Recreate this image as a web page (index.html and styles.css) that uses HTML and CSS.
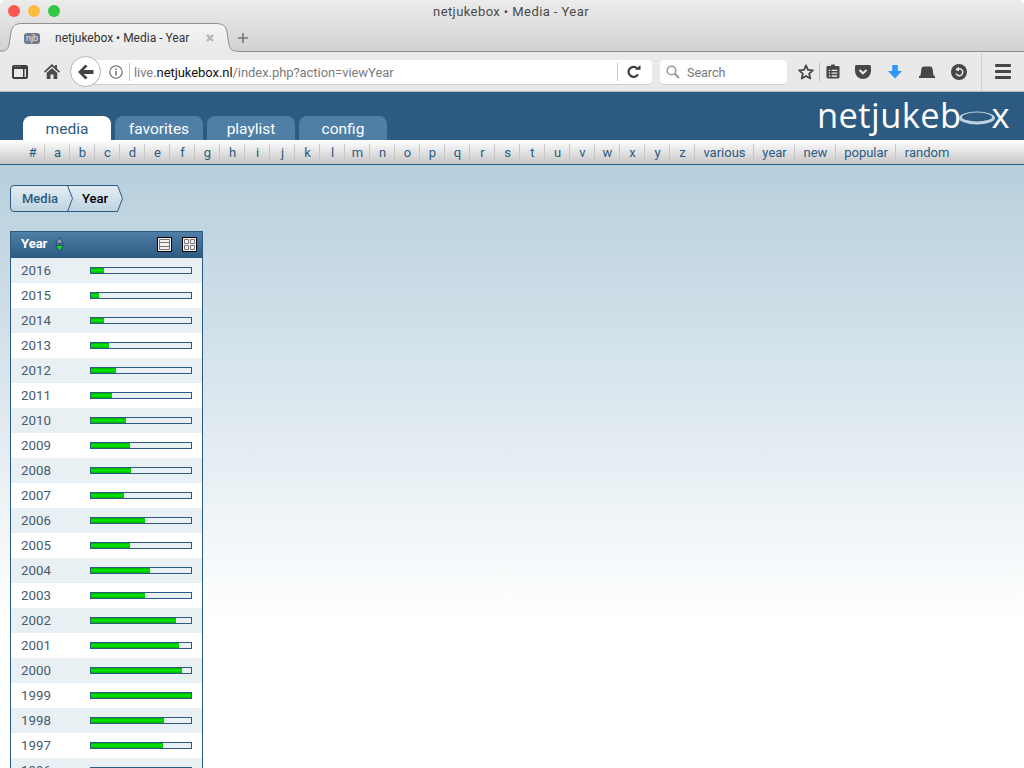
FILE: index.html
```html
<!DOCTYPE html>
<html lang="en">
<head>
<meta charset="utf-8">
<title>netjukebox • Media - Year</title>
<link rel="stylesheet" href="styles.css">
</head>
<body>
<div class="window">
  <header class="browser">
    <div class="titlebar">
      <div class="lights"><span class="light red"></span><span class="light amber"></span><span class="light green"></span></div>
      <div class="wintitle">netjukebox • Media - Year</div>
    </div>
    <div class="tabstrip">
      <div class="tab">
        <svg class="tabshape" width="238" height="29" viewBox="0 0 238 29"><defs><linearGradient id="tg" x1="0" y1="0" x2="0" y2="1"><stop offset="0" stop-color="#f4f4f4"/><stop offset="1" stop-color="#e9e9e9"/></linearGradient></defs><path d="M0 29V28H3C7 28 8.500 25 9.500 19L11 9C12 3 15.500 .5 22 .5H216C222.500 .5 226 3 227 9L228.500 19C229.500 25 231 28 235 28H238V29Z" fill="url(#tg)"/><path d="M0 28H3C7 28 8.500 25 9.500 19L11 9C12 3 15.500 .5 22 .5H216C222.500 .5 226 3 227 9L228.500 19C229.500 25 231 28 235 28H238" fill="none" stroke="#8e8e8e"/></svg>
        <span class="favicon">njb</span>
        <span class="tabtitle">netjukebox • Media - Year</span>
        <svg class="tabclose" width="10" height="10" viewBox="0 0 10 10"><path d="M2 2L8 8M8 2L2 8" stroke="#b5b5b5" stroke-width="2.400"/></svg>
      </div>
      <svg class="newtab" width="10" height="10" viewBox="0 0 10 10"><path d="M5 0V10M0 5H10" stroke="#777" stroke-width="1.600"/></svg>
    </div>
    <div class="toolbar">
      <svg class="tool sidebar" width="16" height="14" viewBox="0 0 16 14"><rect x="1" y="1" width="14" height="12" rx="1" fill="none" stroke="#3c3c3c" stroke-width="2"/><rect x="1" y="2" width="14" height="2" fill="#3c3c3c"/><rect x="11" y="4" width="1.500" height="9" fill="#3c3c3c"/><rect x="2.500" y="1" width="1" height="1" fill="#9a9a9a"/><rect x="5" y="1" width="1" height="1" fill="#9a9a9a"/><rect x="7.500" y="1" width="1" height="1" fill="#9a9a9a"/></svg>
      <svg class="tool home" width="16" height="15" viewBox="0 0 16 15"><path d="M8 0L11 2.800V1H13V4.700L16 7.500L15 8.800L8 2.600L1 8.800L0 7.500ZM2.700 8.800L8 4.200L13.300 8.800V15H9.500V10.500H6.500V15H2.700Z" fill="#4a4a4a"/></svg>
      <div class="back"><svg width="18" height="16" viewBox="0 0 18 16"><path d="M8.500 0.500L1 8L8.500 15.500L10.500 13.500L6.700 10H16.500V6H6.700L10.500 2.500Z" fill="#444"/></svg></div>
      <div class="urlbar">
        <svg class="info" width="14" height="14" viewBox="0 0 14 14"><circle cx="7" cy="7" r="6.200" fill="none" stroke="#666" stroke-width="1.100"/><rect x="6.300" y="6" width="1.400" height="4.500" fill="#666"/><rect x="6.300" y="3.500" width="1.400" height="1.500" fill="#666"/></svg>
        <span class="urlsep"></span>
        <span class="url">live.<b>netjukebox.nl</b>/index.php?action=viewYear</span>
        <span class="urlsep end"></span>
        <svg class="reload" width="14" height="13" viewBox="0 0 14 13"><path d="M11 9.200A5 5 0 1 1 10 3.200" fill="none" stroke="#3c3c3c" stroke-width="2.200"/><path d="M8 4.800H13.500V0Z" fill="#3c3c3c"/></svg>
      </div>
      <div class="searchbar">
        <svg width="14" height="14" viewBox="0 0 14 14"><circle cx="5.500" cy="5.500" r="4.300" fill="none" stroke="#9a9a9a" stroke-width="1.600"/><path d="M8.700 8.700L13 13" stroke="#9a9a9a" stroke-width="2"/></svg>
        <span class="searchlabel">Search</span>
      </div>
      <svg class="tool star" width="16" height="16" viewBox="0 0 18 18"><path d="M9 1.500L11.200 6.700L16.700 7.200L12.600 10.900L13.800 16.300L9 13.500L4.200 16.300L5.400 10.900L1.300 7.200L6.800 6.700Z" fill="none" stroke="#474747" stroke-width="2" stroke-linejoin="round"/></svg>
      <span class="toolsep"></span>
      <svg class="tool clip" width="14" height="15" viewBox="0 0 15 16"><path d="M5.500 2V0.500H9.500V2H13A1.500 1.500 0 0 1 14.500 3.500V14A1.500 1.500 0 0 1 13 15.500H2A1.500 1.500 0 0 1 .5 14V3.500A1.500 1.500 0 0 1 2 2Z" fill="#474747"/><path d="M3 6H4.500V7.500H3ZM6 6H12V7.500H6ZM3 9H4.500V10.500H3ZM6 9H12V10.500H6ZM3 12H4.500V13.500H3ZM6 12H12V13.500H6Z" fill="#e9e9e9"/></svg>
      <svg class="tool pocket" width="16" height="14" viewBox="0 0 16 14"><path d="M1.500 0H14.500A1.500 1.500 0 0 1 16 1.500V6A8 8 0 0 1 0 6V1.500A1.500 1.500 0 0 1 1.500 0Z" fill="#474747"/><path d="M4.500 5L8 8.300L11.500 5" fill="none" stroke="#e9e9e9" stroke-width="2"/></svg>
      <svg class="tool down" width="14" height="14" viewBox="0 0 15 15"><path d="M4.500 0H10.500V6.500H15L7.500 14.500L0 6.500H4.500Z" fill="#2e97f7"/></svg>
      <svg class="tool hat" width="16" height="12" viewBox="0 0 16 12"><path d="M5 0.500H11C13 .5 13.500 2 13.800 4L14.500 9.500L16 10V12H0V10L1.500 9.500L2.200 4C2.500 2 3 .5 5 .5Z" fill="#474747"/></svg>
      <svg class="tool clock" width="16" height="16" viewBox="0 0 16 16"><circle cx="8" cy="8" r="8" fill="#474747"/><path d="M5.200 6.400A3.500 3.500 0 1 1 5 9.500" fill="none" stroke="#e9e9e9" stroke-width="1.500"/><path d="M8 2.800V7.500L4.500 5.300Z" fill="#e9e9e9"/></svg>
      <span class="toolsep tall"></span>
      <div class="tool burger"><span></span><span></span><span></span></div>
    </div>
  </header>

  <main class="site">
    <div class="masthead">
      <nav class="tabs">
        <a class="sitetab on">media</a>
        <a class="sitetab">favorites</a>
        <a class="sitetab">playlist</a>
        <a class="sitetab">config</a>
      </nav>
      <div class="logo">netjukeb<svg class="logo-o" width="36" height="14" viewBox="0 0 36 14"><ellipse cx="18" cy="7" rx="18" ry="6.500" fill="#bdd3df"/><ellipse cx="18" cy="6" rx="15" ry="4.400" fill="#2c5a81"/></svg>x</div>
    </div>
    <nav class="letters">
      <a>#</a><a>a</a><a>b</a><a>c</a><a>d</a><a>e</a><a>f</a><a>g</a><a>h</a><a>i</a><a>j</a><a>k</a><a>l</a><a>m</a><a>n</a><a>o</a><a>p</a><a>q</a><a>r</a><a>s</a><a>t</a><a>u</a><a>v</a><a>w</a><a>x</a><a>y</a><a>z</a><a class="word">various</a><a class="word">year</a><a class="word">new</a><a class="word">popular</a><a class="word last">random</a>
    </nav>
    <div class="content">
      <div class="crumbs">
        <svg class="crumbshape" width="114" height="27" viewBox="0 0 114 27"><defs><linearGradient id="cg" x1="0" y1="0" x2="0" y2="1"><stop offset="0" stop-color="#e4eef4"/><stop offset="1" stop-color="#bdd3e0"/></linearGradient></defs><path d="M4 .5H107.500L112.500 13.500L107.500 26.500H4A3.500 3.500 0 0 1 .5 23V4A3.500 3.500 0 0 1 4 .5Z" fill="url(#cg)" stroke="#2d5a80"/><path d="M57.500 .5L62.500 13.500L57.500 26.500" fill="none" stroke="#2d5a80"/></svg>
        <span class="crumb">Media</span><span class="crumb current">Year</span>
      </div>
      <section class="list">
        <div class="listhead">
          <span class="headtitle">Year</span>
          <svg class="sort" width="9" height="15" viewBox="0 0 9 15"><path d="M4.500 0L9 6.500H0Z" fill="#264f72"/><path d="M4.500 1.600L7.300 5.800H1.700Z" fill="#8fa5b7"/><path d="M4.500 15L0 8H9Z" fill="#264f72"/><path d="M4.500 13.400L1.500 9H7.500Z" fill="#00f000"/></svg>
          <svg class="viewicon first" width="15" height="15" viewBox="0 0 15 15"><rect x=".5" y=".5" width="14" height="14" fill="#f2f2f2" stroke="#000"/><path d="M2.500 2.500H12.500V5.500H2.500ZM2.500 5.500H12.500V9.500H2.500ZM2.500 9.500H12.500V12.500H2.500Z" fill="none" stroke="#777"/></svg>
          <svg class="viewicon" width="15" height="15" viewBox="0 0 15 15"><rect x=".5" y=".5" width="14" height="14" fill="#f2f2f2" stroke="#000"/><path d="M2.500 2.500H6.500V6.500H2.500ZM8.500 2.500H12.500V6.500H8.500ZM2.500 8.500H6.500V12.500H2.500ZM8.500 8.500H12.500V12.500H8.500Z" fill="none" stroke="#777"/></svg>
        </div>
        <div class="row"><span class="year">2016</span><span class="bar"><i style="width:13%"></i></span></div>
        <div class="row"><span class="year">2015</span><span class="bar"><i style="width:8%"></i></span></div>
        <div class="row"><span class="year">2014</span><span class="bar"><i style="width:13%"></i></span></div>
        <div class="row"><span class="year">2013</span><span class="bar"><i style="width:18%"></i></span></div>
        <div class="row"><span class="year">2012</span><span class="bar"><i style="width:25%"></i></span></div>
        <div class="row"><span class="year">2011</span><span class="bar"><i style="width:21%"></i></span></div>
        <div class="row"><span class="year">2010</span><span class="bar"><i style="width:35%"></i></span></div>
        <div class="row"><span class="year">2009</span><span class="bar"><i style="width:39%"></i></span></div>
        <div class="row"><span class="year">2008</span><span class="bar"><i style="width:40%"></i></span></div>
        <div class="row"><span class="year">2007</span><span class="bar"><i style="width:33%"></i></span></div>
        <div class="row"><span class="year">2006</span><span class="bar"><i style="width:54%"></i></span></div>
        <div class="row"><span class="year">2005</span><span class="bar"><i style="width:39%"></i></span></div>
        <div class="row"><span class="year">2004</span><span class="bar"><i style="width:59%"></i></span></div>
        <div class="row"><span class="year">2003</span><span class="bar"><i style="width:54%"></i></span></div>
        <div class="row"><span class="year">2002</span><span class="bar"><i style="width:85%"></i></span></div>
        <div class="row"><span class="year">2001</span><span class="bar"><i style="width:88%"></i></span></div>
        <div class="row"><span class="year">2000</span><span class="bar"><i style="width:91%"></i></span></div>
        <div class="row"><span class="year">1999</span><span class="bar"><i style="width:100%"></i></span></div>
        <div class="row"><span class="year">1998</span><span class="bar"><i style="width:73%"></i></span></div>
        <div class="row"><span class="year">1997</span><span class="bar"><i style="width:72%"></i></span></div>
        <div class="row"><span class="year">1996</span><span class="bar"><i style="width:60%"></i></span></div>
      </section>
    </div>
  </main>
</div>
</body>
</html>
```
FILE: styles.css
```css
html, body {
  margin: 0;
  padding: 0;
  height: 768px;
  overflow: hidden;
  background: #fff;
  font-family: Roboto, "Liberation Sans", sans-serif;
}

.window {
  height: 768px;
  overflow: hidden;
  display: flex;
  flex-direction: column;
  border-radius: 6px 6px 0 0;
}

/* browser chrome */
.browser {
  flex: none;
  height: 92px;
  display: flex;
  flex-direction: column;
  background: linear-gradient(#ececec, #d1d1d1 52px, #e9e9e9 52px);
}

.titlebar {
  position: relative;
  height: 23px;
  display: flex;
  align-items: center;
  justify-content: center;
}

.lights {
  position: absolute;
  left: 8px;
  top: 5px;
  display: flex;
  gap: 8px;
}

.light {
  width: 12px;
  height: 12px;
  border-radius: 50%;
}

.red { background: #fc5753; }
.amber { background: #fdbc40; }
.green { background: #33c748; }

.wintitle {
  margin-right: 2px;
  font-size: 13px;
  color: #4a4a4a;
  letter-spacing: .42px;
}

.tabstrip {
  height: 28px;
  display: flex;
  align-items: center;
  border-bottom: 1px solid #8e8e8e;
}

.tab {
  position: relative;
  width: 227px;
  height: 28px;
  padding-top: 2px;
  box-sizing: border-box;
  display: flex;
  align-items: center;
  z-index: 1;
}

.tabshape {
  position: absolute;
  left: 0;
  top: 0;
}

.favicon {
  position: relative;
  margin-left: 24px;
  width: 16px;
  height: 11px;
  line-height: 10px;
  text-align: center;
  font-size: 9px;
  color: #e9e9f0;
  background: #70788f;
  border-radius: 3px;
}

.tabtitle {
  position: relative;
  margin-left: 15px;
  font-size: 12px;
  color: #333;
  white-space: nowrap;
}

.tabclose {
  position: relative;
  margin-left: 16px;
}

.newtab {
  margin-left: 11px;
  position: relative;
  top: 1px;
}

.toolbar {
  position: relative;
  height: 39px;
  display: flex;
  align-items: center;
  border-bottom: 1px solid #b9b9b9;
  background: #e9e9e9;
}

.tool { flex: none; }
.sidebar { margin-left: 12px; }
.home { margin-left: 16px; }

.back {
  position: relative;
  z-index: 1;
  box-sizing: border-box;
  width: 31px;
  height: 31px;
  margin-left: 10px;
  border: 1px solid #b4b4b4;
  border-radius: 50%;
  background: #fff;
  display: flex;
  align-items: center;
  justify-content: center;
}

.urlbar {
  flex: none;
  width: 559px;
  height: 24px;
  margin-left: -8px;
  background: #fff;
  border-radius: 0 4px 4px 0;
  box-shadow: 0 1px 0 #cfcfcf;
  display: flex;
  align-items: center;
}

.info { margin-left: 16px; flex: none; }

.urlsep {
  flex: none;
  width: 1px;
  height: 18px;
  margin-left: 6px;
  background: #c8c8c8;
}

.url {
  margin-left: 4px;
  font-size: 13px;
  letter-spacing: -.06px;
  color: #7c7c7c;
  white-space: nowrap;
  padding-top: 1px;
}

.url b {
  font-weight: 400;
  color: #111;
}

.urlsep.end {
  margin-left: auto;
}

.reload {
  flex: none;
  margin: 0 11px 0 9px;
}

.searchbar {
  flex: none;
  width: 127px;
  height: 24px;
  margin-left: 8px;
  background: #fff;
  border-radius: 4px;
  box-shadow: 0 1px 0 #cfcfcf;
  display: flex;
  align-items: center;
  gap: 7px;
  padding-left: 6px;
  box-sizing: border-box;
  font-size: 12.500px;
  color: #777;
}

.searchlabel { padding-top: 2px; }

.star { margin-left: 11px; }

.toolsep {
  flex: none;
  width: 1px;
  height: 18px;
  margin-left: 5px;
  background: #bdbdbd;
}

.clip { margin-left: 6px; }
.pocket { margin-left: 15px; }
.down { margin-left: 17px; }
.hat { margin-left: 17px; }
.clock { margin-left: 16px; }

.toolsep.tall {
  height: 38px;
  margin-left: 14px;
  background: #d2d2d2;
}

.burger {
  margin-left: 13px;
  width: 16px;
  display: flex;
  flex-direction: column;
  gap: 3px;
}

.burger span {
  height: 3px;
  border-radius: 1px;
  background: #474747;
}

/* site */
.site {
  flex: 1;
  min-height: 0;
  display: flex;
  flex-direction: column;
}

.masthead {
  flex: none;
  height: 48px;
  padding-left: 23px;
  padding-right: 14px;
  display: flex;
  justify-content: space-between;
  align-items: flex-end;
  background: #2c5a81;
}

.tabs {
  display: flex;
  gap: 4px;
}

.sitetab {
  width: 88px;
  height: 24px;
  line-height: 26px;
  text-align: center;
  font-size: 15.500px;
  color: #fff;
  background: #4f7ea6;
  border-radius: 8px 8px 0 0;
}

.sitetab.on {
  background: #fff;
  color: #2c5a81;
}

.logo {
  align-self: flex-start;
  display: flex;
  align-items: center;
  height: 46px;
  font-family: "Open Sans", sans-serif;
  font-weight: 400;
  font-size: 34.500px;
  letter-spacing: .4px;
  line-height: 46px;
  color: #fff;
}

.logo-o { margin: 6px -3px 0 -3px; }

.letters {
  flex: none;
  height: 24px;
  padding-left: 20px;
  display: flex;
  align-items: stretch;
  background: linear-gradient(#fff, #c6c6c6);
  border-bottom: 1px solid #2c5a81;
}

.letters a {
  width: 25px;
  box-sizing: border-box;
  line-height: 25px;
  text-align: center;
  font-size: 13px;
  color: #2c5a81;
  background: linear-gradient(#c6c6c6, #c6c6c6) right center / 1px 17px no-repeat;
}

.letters a.word {
  width: auto;
  padding: 0 8.400px;
}

.letters a.last { background: none; }

.content {
  flex: 1;
  min-height: 0;
  padding: 20px 10px 0;
  background: linear-gradient(#b7cfdd, #ffffff 455px);
}

.crumbs {
  position: relative;
  width: 114px;
  height: 27px;
  display: flex;
  align-items: center;
  font-size: 13px;
  font-weight: 500;
  color: #2c5a81;
}

.crumbshape {
  position: absolute;
  left: 0;
  top: 0;
}

.crumb {
  position: relative;
  margin-left: 12px;
}

.crumb.current {
  margin-left: 24px;
  color: #000;
}

.list {
  margin-top: 19px;
  width: 193px;
  box-sizing: border-box;
  border: 1px solid #2c5a81;
  border-bottom: 0;
}

.listhead {
  height: 26px;
  box-sizing: border-box;
  padding: 0 0 2px 10px;
  display: flex;
  align-items: center;
  background: linear-gradient(#4f7ea6, #2c5a81);
}

.headtitle {
  font-size: 13px;
  font-weight: 700;
  color: #fff;
  margin-top: -1px;
}

.sort { margin-left: 8px; }
.viewicon { margin-left: 10px; }
.viewicon.first { margin-left: auto; }
.viewicon:last-child { margin-right: 5px; }

.row {
  height: 25px;
  display: flex;
  align-items: center;
  padding-left: 10px;
  font-size: 13.300px;
  color: #475a6c;
}

.row:nth-child(even) { background: #e8f0f4; }
.row:nth-child(odd) { background: #fff; }

.year { width: 69px; }

.bar {
  box-sizing: border-box;
  width: 102px;
  height: 7px;
  border: 1px solid #2c5a81;
  background: #e8f0f4;
}

.bar i {
  display: block;
  height: 100%;
  background: linear-gradient(#00a800, #00ee00 45%, #00b000);
}
```
